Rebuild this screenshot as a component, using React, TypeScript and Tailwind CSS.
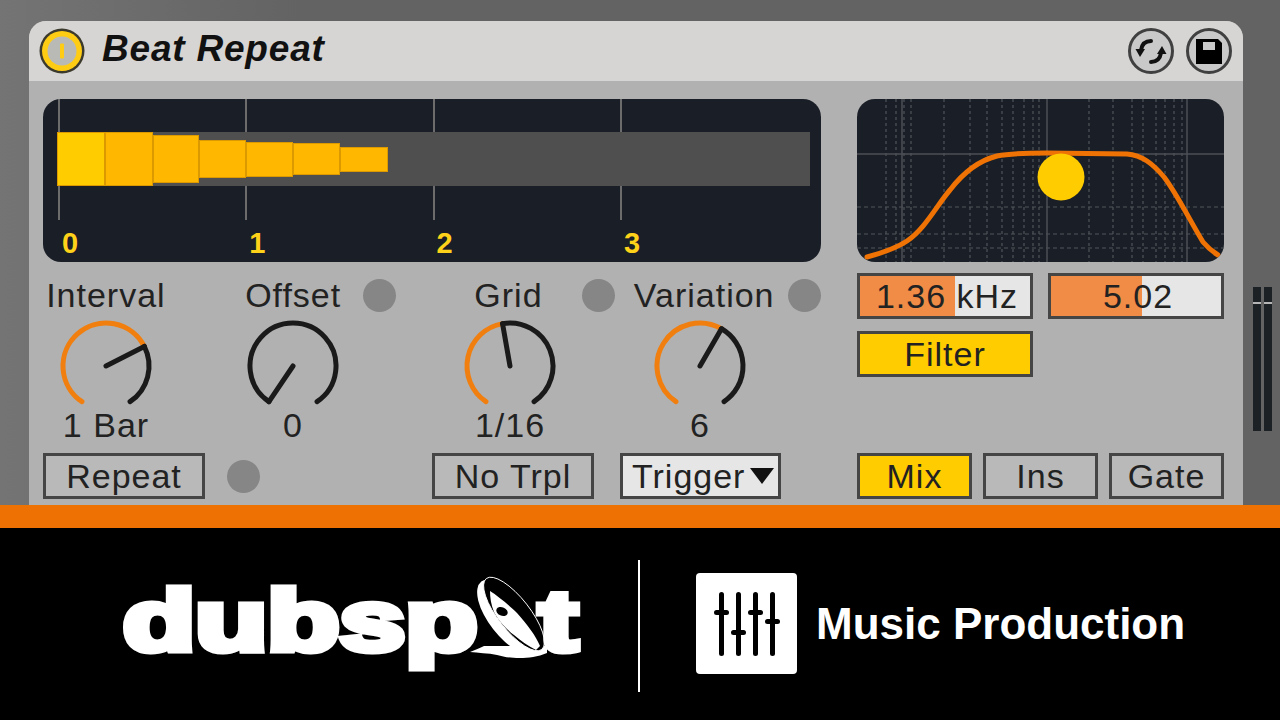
import React from 'react';

const FONT = "font-['Liberation_Sans',Arial,sans-serif]";

const blocks = [
  { h: 'h-[54px]', bg: 'bg-[#ffcc00]', w: 'w-[48px]' },
  { h: 'h-[54px]', bg: 'bg-[#ffb700]', w: 'w-[48px]' },
  { h: 'h-[48px]', bg: 'bg-[#ffb700]', w: 'w-[46px]' },
  { h: 'h-[38px]', bg: 'bg-[#ffb700]', w: 'w-[47px]' },
  { h: 'h-[35px]', bg: 'bg-[#ffb700]', w: 'w-[47px]' },
  { h: 'h-[32px]', bg: 'bg-[#ffb700]', w: 'w-[47px]' },
  { h: 'h-[25px]', bg: 'bg-[#ffb700]', w: 'w-[48px]' }
];

const knobs = [
  { value: '1 Bar', angle: 63, col: 'w-[126px]' },
  { value: '0', angle: -146, col: 'w-[248px]' },
  { value: '1/16', angle: -10, col: 'w-[186px]' },
  { value: '6', angle: 30, col: 'w-[194px]' }
];

const dashedX = [29, 39, 47, 54, 87, 113, 130, 145, 156, 167, 176, 182, 232, 256, 275, 286, 299, 308, 317, 325];
const dashedY = [108, 135, 149];
const solidX = [45, 190, 330];

function polar(angle: number, r = 43) {
  const a = (angle * Math.PI) / 180;
  return `${50 + r * Math.sin(a)} ${48 - r * Math.cos(a)}`;
}

function Knob({ angle }: { angle: number }) {
  const start = -146;
  const end = 146;
  return (
    <svg width="100" height="90" viewBox="0 0 100 90" fill="none" strokeWidth="5" strokeLinecap="round">
      {angle > start && (
        <path d={`M${polar(start)} A43 43 0 ${angle - start > 180 ? 1 : 0} 1 ${polar(angle)}`} stroke="#f07f0f" />
      )}
      <path d={`M${polar(angle)} A43 43 0 ${end - angle > 180 ? 1 : 0} 1 ${polar(end)}`} stroke="#1a1a1a" />
      <path d={`M50 48 L${polar(angle)}`} stroke="#1a1a1a" />
    </svg>
  );
}

function Led({ className = '' }: { className?: string }) {
  return <div className={`w-[33px] h-[33px] rounded-full bg-[#868686] ${className}`} />;
}

function Toggle({ label, className = '', on = false }: { label: string; className?: string; on?: boolean }) {
  return (
    <div
      className={`h-[46px] border-[3px] border-[#454545] flex items-center justify-center text-[34px] tracking-[1px] text-[#222] ${
        on ? 'bg-[#ffcc00]' : 'bg-[#b9b9b9]'
      } ${className}`}
    >
      {label}
    </div>
  );
}

function NumberBox({ label, fill }: { label: string; fill: string }) {
  return (
    <div className="relative w-[176px] h-[46px] border-[3px] border-[#454545] bg-[#e6e6e6] text-[34px] tracking-[1px] text-[#222]">
      <div className={`h-full bg-[#f08c46] ${fill}`} />
      <div className="absolute inset-0 pl-[4px] flex items-center justify-center">{label}</div>
    </div>
  );
}

function FilterGraph() {
  return (
    <svg width="367" height="163" viewBox="0 0 367 163" className="block rounded-[18px] bg-[#1a1f27]" fill="none">
      {dashedX.map((x) => (
        <line key={x} x1={x} x2={x} y1="0" y2="163" stroke="#50545a" strokeWidth="1.2" strokeDasharray="3 3" />
      ))}
      {dashedY.map((y) => (
        <line key={y} x1="0" x2="367" y1={y} y2={y} stroke="#50545a" strokeWidth="1.2" strokeDasharray="4 3" />
      ))}
      {solidX.map((x) => (
        <line key={x} x1={x} x2={x} y1="0" y2="163" stroke="#4c4f55" strokeWidth="1.5" />
      ))}
      <line x1="0" x2="367" y1="55" y2="55" stroke="#4c4f55" strokeWidth="1.5" />
      <path
        d="M10 158 C25 154 38 150 50 142 C68 130 80 106 93 91 C106 74 120 62 140 57 C155 54 175 54 190 54 L270 55 C285 56 296 65 307 78 C320 95 332 120 346 143 C351 149 356 153 361 156"
        stroke="#ef7205"
        strokeWidth="5"
        strokeLinecap="round"
      />
      <circle cx="204" cy="78" r="23.5" fill="#ffcc00" />
    </svg>
  );
}

function RoundIcon({ type }: { type: 'sync' | 'save' }) {
  return (
    <svg width="46" height="46" viewBox="0 0 46 46" fill="none">
      <circle cx="23" cy="23" r="21.5" fill="#c9c9c9" stroke="#404040" strokeWidth="3" />
      {type === 'sync' ? (
        <>
          <path d="M23 13 C18 13 14 16 13 22" stroke="#111" strokeWidth="4" strokeLinecap="round" />
          <path d="M7.5 21 L17 21 L12 29 Z" fill="#111" />
          <path d="M23 34 C28 34 32 31 33 25" stroke="#111" strokeWidth="4" strokeLinecap="round" />
          <path d="M29 26 L38.5 26 L34 18 Z" fill="#111" />
        </>
      ) : (
        <>
          <path d="M10 11 H32 L36 15 V36 H10 Z" fill="#000" />
          <rect x="17" y="14" width="12" height="8" fill="#c9c9c9" />
        </>
      )}
    </svg>
  );
}

function PowerIcon() {
  return (
    <svg width="46" height="46" viewBox="0 0 46 46">
      <circle cx="23" cy="23" r="22.5" fill="#3c3a2c" />
      <circle cx="23" cy="23" r="20" fill="#ffcc14" />
      <circle cx="23" cy="23" r="14.5" fill="#b9b9b6" />
      <rect x="21" y="15.5" width="4" height="15" rx="1" fill="#ffcc14" />
    </svg>
  );
}

function Speaker() {
  return (
    <svg width="130" height="100" viewBox="0 0 130 100" className="shrink-0">
      <ellipse cx="50" cy="46" rx="28" ry="50" transform="rotate(-38 50 46)" fill="#000" />
      <path d="M10 82 C15 80 20 78 24 76 L87 76 L87 83 C78 87 68 88 60 88 C50 88 44 87 37 85 C28 83 18 83 10 82 Z" fill="#fff" />
      <ellipse cx="49" cy="47" rx="20" ry="45" transform="rotate(-38 49 47)" fill="#fff" />
      <ellipse cx="54" cy="44" rx="16" ry="45" transform="rotate(-38 54 44)" fill="#000" stroke="#fff" strokeWidth="0.9" />
      <path d="M30 21 C38 26 50 36 57 43 C67 54 76 66 80 76 L76 80 C68 76 61 71 54 65 C46 59 38 50 34 42 C31 35 30 27 30 21 Z" fill="#fff" />
      <ellipse cx="42" cy="41.5" rx="6" ry="4.2" transform="rotate(25 42 41.5)" fill="#000" />
    </svg>
  );
}

function SliderIcon() {
  const sliders = [
    { x: 'ml-0', knob: 'mt-[18px]' },
    { x: 'ml-[12px]', knob: 'mt-[38px]' },
    { x: 'ml-[12px]', knob: 'mt-[18px]' },
    { x: 'ml-[12px]', knob: 'mt-[27px]' }
  ];
  return (
    <div className="w-[101px] h-[101px] mt-[13px] ml-[56px] rounded-[4px] bg-white flex justify-center items-center">
      {sliders.map((s, i) => (
        <div key={i} className={`relative w-[5px] h-[64px] rounded-full bg-black ${s.x}`}>
          <div className={`absolute left-[-5px] w-[15px] h-[5px] rounded-full bg-black ${s.knob}`} />
        </div>
      ))}
    </div>
  );
}

export default function App() {
  return (
    <div className={`w-[1280px] h-[720px] overflow-hidden flex flex-col bg-black ${FONT}`}>
      {/* device view */}
      <div className="h-[505px] shrink-0 bg-[linear-gradient(90deg,#747474,#636363_300px)] flex pt-[21px] pl-[29px]">
        <div className="w-[1214px] h-[484px] rounded-t-[17px] overflow-hidden bg-[#b1b1b1]">
          <div className="h-[60px] bg-[#d6d5d3] flex items-center pl-[10px] pr-[11px]">
            <PowerIcon />
            <div className="ml-[17px] mb-[4px] text-[37px] font-bold italic tracking-[0.8px] text-[#111]">Beat Repeat</div>
            <div className="ml-auto flex gap-[12px]">
              <RoundIcon type="sync" />
              <RoundIcon type="save" />
            </div>
          </div>

          <div className="flex pt-[18px] pl-[14px]">
            {/* left section */}
            <div className="w-[778px]">
              <div className="h-[163px] rounded-[18px] bg-[#1a1f27] pl-[14px] flex flex-col">
                <div className="grid grid-cols-[187.3px_187.3px_187.3px_187.3px] h-[33px] ml-[1px]">
                  {[0, 1, 2, 3].map((i) => (
                    <div key={i} className="border-l-2 border-[#6c6c6c]" />
                  ))}
                </div>
                <div className="w-[753px] h-[54px] bg-[#4f4f4f] flex items-center">
                  {blocks.map((b, i) => (
                    <div key={i} className={`border border-[#dd9a00] ${b.h} ${b.bg} ${b.w}`} />
                  ))}
                </div>
                <div className="grid grid-cols-[187.3px_187.3px_187.3px_187.3px] h-[34px] ml-[1px]">
                  {[0, 1, 2, 3].map((i) => (
                    <div key={i} className="border-l-2 border-[#6c6c6c]" />
                  ))}
                </div>
                <div className="grid grid-cols-[187.3px_187.3px_187.3px_187.3px] mt-[8px] text-[29px] font-bold leading-[30px] text-[#ffd21a]">
                  {[0, 1, 2, 3].map((i) => (
                    <div key={i} className="pl-[5px]">{i}</div>
                  ))}
                </div>
              </div>

              <div className="flex items-center h-[33px] mt-[17px] text-[34px] tracking-[1px] text-[#222]">
                <div className="w-[126px] text-center">Interval</div>
                <div className="w-[127px] ml-[61px] text-center">Offset</div>
                <Led className="ml-[6px]" />
                <div className="w-[118px] ml-[54px] text-center">Grid</div>
                <Led className="ml-[15px]" />
                <div className="w-[150px] ml-[14px] text-center">Variation</div>
                <Led className="ml-[9px]" />
              </div>

              <div className="flex mt-[6px] text-[34px] tracking-[1px] text-[#222]">
                {knobs.map((k) => (
                  <div key={k.value} className={`flex flex-col items-center ${k.col}`}>
                    <Knob angle={k.angle} />
                    <div className="h-[34px] leading-[34px]">{k.value}</div>
                  </div>
                ))}
              </div>

              <div className="flex items-center mt-[11px]">
                <Toggle label="Repeat" className="w-[162px]" />
                <Led className="ml-[22px]" />
                <Toggle label="No Trpl" className="w-[162px] ml-[172px]" />
                <div className="w-[161px] h-[46px] ml-[26px] border-[3px] border-[#454545] bg-[#e6e6e6] flex items-center pl-[9px] text-[34px] tracking-[1px] text-[#222]">
                  Trigger
                  <svg width="24" height="16" viewBox="0 0 24 16" className="ml-auto mr-[4px]">
                    <path d="M0 0 H24 L12 16 Z" fill="#111" />
                  </svg>
                </div>
              </div>
            </div>

            {/* right section */}
            <div className="w-[367px] ml-[36px]">
              <FilterGraph />
              <div className="flex gap-[15px] mt-[11px]">
                <NumberBox label="1.36 kHz" fill="w-[95px]" />
                <NumberBox label="5.02" fill="w-[91px]" />
              </div>
              <Toggle label="Filter" on className="w-[176px] mt-[12px]" />
              <div className="flex gap-[11px] mt-[76px]">
                <Toggle label="Mix" on className="w-[115px]" />
                <Toggle label="Ins" className="w-[115px]" />
                <Toggle label="Gate" className="w-[115px]" />
              </div>
            </div>
          </div>
        </div>

        {/* level meter */}
        <div className="flex gap-[3px] ml-[10px] mt-[266px] h-[144px]">
          {[0, 1].map((i) => (
            <div key={i} className="w-[8px] bg-[#1c2126] pt-[15px]">
              <div className="h-[2px] bg-[#b5b5b5]" />
            </div>
          ))}
        </div>
      </div>

      <div className="h-[23px] shrink-0 bg-[#ee7203]" />

      {/* brand strip */}
      <div className="flex-1 flex items-start pt-[32px] pl-[122px] bg-black">
        <div className="w-[516px] h-[132px] relative text-white font-bold">
          <div className="absolute left-[1px] top-[13px] origin-left scale-x-[1.39] text-[85px] leading-[96px] [-webkit-text-stroke:7px_white]">dubsp</div>
          <div className="absolute left-[338px] top-[10px]">
            <Speaker />
          </div>
          <div className="absolute left-[417px] top-[13px] origin-left scale-x-[1.36] text-[85px] leading-[96px] [-webkit-text-stroke:7px_white]">t</div>
        </div>
        <div className="w-[2px] h-[132px] bg-white" />
        <SliderIcon />
        <div className="ml-[19px] mt-[39px] text-[44px] leading-[50px] font-bold text-white">Music Production</div>
      </div>
    </div>
  );
}
